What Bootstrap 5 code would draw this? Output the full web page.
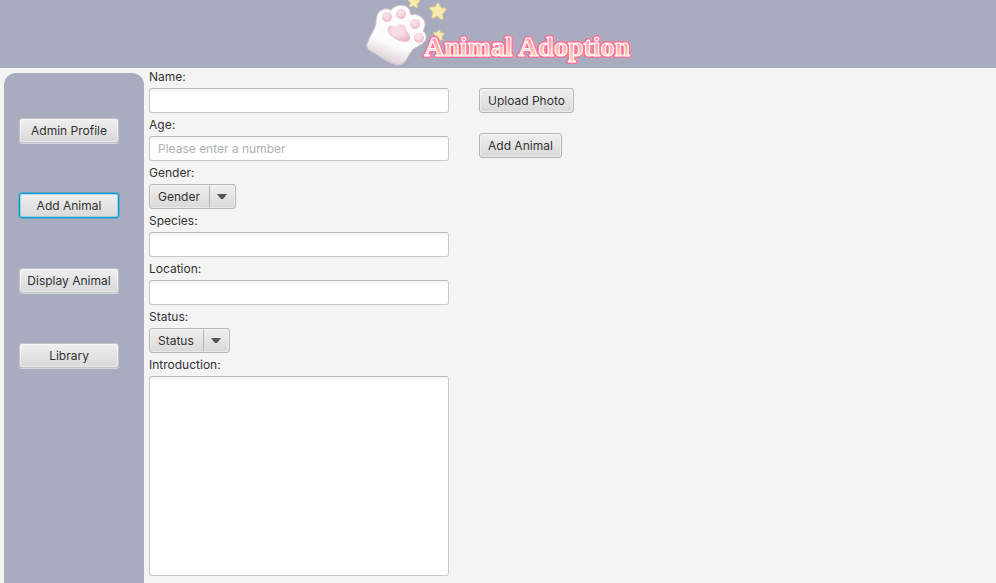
<!DOCTYPE html>
<html lang="en">
<head>
<meta charset="utf-8">
<meta name="viewport" content="width=device-width, initial-scale=1">
<title>Animal Adoption</title>
<link href="https://cdn.jsdelivr.net/npm/bootstrap@5.3.0/dist/css/bootstrap.min.css" rel="stylesheet">
<style>
  :root { --lavender: #a9abbf; --page: #f4f4f4; --ink: #323232; --edge: #b6b6b6; }
  body { background: var(--page); color: var(--ink); font: 12px/17px Inter, "Liberation Sans", sans-serif; }
  .app-header { background: var(--lavender); height: 68px; }
  .app-side { background: var(--lavender); width: 140px; border-radius: 12px 12px 0 0; margin: 5px 5px 0 4px; padding: 45px 25px 20px 15px; gap: 50px; }
  .app-btn, .app-pick {
    height: 25px; padding: 0 8px; border: 1px solid var(--edge); border-radius: 3px; color: var(--ink);
    font-size: 12px; line-height: 17px; background: linear-gradient(#efefef, #d9d9d9); box-shadow: inset 0 0 0 1px #ffffff66;
  }
  .app-side .app-btn { padding: 0; height: 25px; border-color: #c3c3c8; box-shadow: inset 0 0 0 1px #ffffff66, 0 1px 0 #d5d6de; }
  .app-side .app-btn.active { color: var(--ink); border-color: #039ed3; background: linear-gradient(#efefef, #d9d9d9); box-shadow: 0 0 0 1px #039ed366, inset 0 0 0 1px #039ed344; }
  .app-fields { width: 300px; gap: 3px; }
  .app-input { height: 25px; padding: 0 8px; border: 1px solid #c8c8c8; border-top-color: #b8b8b8; border-radius: 3px; font-size: 12px; line-height: 17px; background: linear-gradient(#f2f2f2, #fff 4px); }
  .app-input::placeholder { color: #b0b0b0; }
  textarea.app-input { height: 200px; resize: none; }
  .app-pick {
    appearance: none; padding: 0 35px 0 8px;
    background:
      url("data:image/svg+xml,%3Csvg xmlns='http://www.w3.org/2000/svg' width='10' height='6'%3E%3Cpath d='M0 0h10L6 5H4z' fill='%23555'/%3E%3C/svg%3E") right 8px center / 10px 6px no-repeat,
      linear-gradient(#b6b6b6, #b6b6b6) right 25px center / 1px 100% no-repeat,
      linear-gradient(#efefef, #d9d9d9);
  }
  .app-actions { gap: 20px; padding: 20px 0 0 30px; }
  .logo-text { font: bold 28px "Liberation Serif", serif; stroke-linejoin: round; }
</style>
</head>
<body>
<div class="d-flex flex-column min-vh-100">
  <header class="app-header d-flex justify-content-center">
    <svg width="268" height="68" viewBox="364 0 268 68" role="img" aria-label="Animal Adoption">
      <defs>
        <linearGradient id="peach" x1="0" y1="0" x2="0" y2="1"><stop offset=".2" stop-color="#ff8fac"/><stop offset=".8" stop-color="#ffcfaa"/></linearGradient>
        <linearGradient id="fur" x1=".7" y1=".2" x2=".4" y2="1"><stop offset=".6" stop-color="#fdfcfd"/><stop offset="1" stop-color="#d9ccd2"/></linearGradient>
        <radialGradient id="pad" cx=".45" cy=".35" r=".65"><stop offset=".4" stop-color="#f9dce5"/><stop offset="1" stop-color="#e8b6c4"/></radialGradient>
        <path id="star" d="M-1-7Q0-9 1-7L3-3 7-3Q9-2 7 0L4 3 5 7Q5 9 3 8L-1 5-5 7Q-7 7-6 5L-5 1-8-2Q-9-4-6-4L-3-4z" fill="#f8ebae" stroke="#e6d48c" stroke-width="1" stroke-linejoin="round"/>
      </defs>
      <path d="M367 44C369 37 374 31 376 24C376 17 377 12 382 10C385 8 388 9 391 10C395 5 402 4 407 7C410 9 410 12 411 15C416 13 421 16 424 20C426 24 425 27 423 31C427 34 427 39 424 42C420 47 413 47 411 52C407 57 405 66 397 65C388 63 381 57 374 53C370 51 366 49 367 44Z" fill="url(#fur)" stroke="#d2c3ce" stroke-width="1"/>
      <g fill="url(#pad)">
        <circle cx="387" cy="17" r="5"/><circle cx="401" cy="14" r="5"/>
        <circle cx="415" cy="24" r="5"/><circle cx="419" cy="38" r="5"/>
        <path d="M388 27C390 24 394 27 397 26C401 23 406 25 406 29C407 32 410 34 410 38C409 43 404 42 400 41C394 39 385 34 388 27Z"/>
      </g>
      <use href="#star" transform="translate(414 2) scale(.7)"/>
      <use href="#star" transform="translate(438 11)"/>
      <use href="#star" transform="translate(439 35) scale(.65)"/>
      <g class="logo-text">
        <text x="424" y="56" fill="#ff6f98" stroke="#ff6f98" stroke-width="4" aria-hidden="true">Animal Adoption</text>
        <text x="424" y="56" fill="url(#peach)" stroke="#fff" stroke-width="1">Animal Adoption</text>
      </g>
    </svg>
  </header>

  <div class="d-flex flex-grow-1">
    <nav class="app-side d-flex flex-column flex-shrink-0" aria-label="Sections">
      <button type="button" class="btn app-btn w-100">Admin Profile</button>
      <button type="button" class="btn app-btn w-100 active" aria-current="page">Add Animal</button>
      <button type="button" class="btn app-btn w-100">Display Animal</button>
      <button type="button" class="btn app-btn w-100">Library</button>
    </nav>

    <main>
      <form class="d-flex align-items-start">
        <div class="app-fields d-flex flex-column align-items-start">
          <label for="name">Name:</label>
          <input id="name" type="text" class="app-input w-100">
          <label for="age">Age:</label>
          <input id="age" type="text" class="app-input w-100" placeholder="Please enter a number">
          <label for="gender">Gender:</label>
          <select id="gender" class="app-pick"><option>Gender</option></select>
          <label for="species">Species:</label>
          <input id="species" type="text" class="app-input w-100">
          <label for="location">Location:</label>
          <input id="location" type="text" class="app-input w-100">
          <label for="status">Status:</label>
          <select id="status" class="app-pick"><option>Status</option></select>
          <label for="intro">Introduction:</label>
          <textarea id="intro" class="app-input w-100"></textarea>
        </div>
        <div class="app-actions d-flex flex-column align-items-start">
          <button type="button" class="btn app-btn">Upload Photo</button>
          <button type="submit" class="btn app-btn">Add Animal</button>
        </div>
      </form>
    </main>
  </div>
</div>
<script src="https://cdn.jsdelivr.net/npm/bootstrap@5.3.0/dist/js/bootstrap.bundle.min.js"></script>
</body>
</html>
